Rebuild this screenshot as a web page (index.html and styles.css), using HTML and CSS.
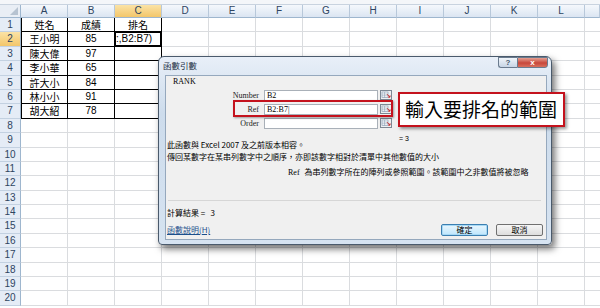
FILE: index.html
```html
<!DOCTYPE html>
<html lang="zh-Hant">
<head>
    <meta charset="UTF-8">
    <title>RANK 函數引數</title>
    <link rel="stylesheet" href="styles.css">
</head>
<body>
    <div class="topbar"></div>

    <!-- Worksheet -->
    <div class="sheet">
        <div class="corner"></div>
        <div class="col-head">A</div>
        <div class="col-head">B</div>
        <div class="col-head sel">C</div>
        <div class="col-head">D</div>
        <div class="col-head">E</div>
        <div class="col-head">F</div>
        <div class="col-head">G</div>
        <div class="col-head">H</div>
        <div class="col-head">I</div>
        <div class="col-head">J</div>
        <div class="col-head">K</div>
        <div class="col-head">L</div>
        <div class="col-head"></div>

        <div class="row-head">1</div>
        <div class="cell first">姓名</div><div class="cell">成績</div><div class="cell">排名</div><div class="rest"></div>
        <div class="row-head sel">2</div>
        <div class="cell first">王小明</div><div class="cell num">85</div><div class="cell active">:,B2:B7)</div><div class="rest"></div>
        <div class="row-head">3</div>
        <div class="cell first">陳大偉</div><div class="cell num">97</div><div class="cell"></div><div class="rest"></div>
        <div class="row-head">4</div>
        <div class="cell first">李小華</div><div class="cell num">65</div><div class="cell"></div><div class="rest"></div>
        <div class="row-head">5</div>
        <div class="cell first">許大小</div><div class="cell num">84</div><div class="cell"></div><div class="rest"></div>
        <div class="row-head">6</div>
        <div class="cell first">林小小</div><div class="cell num">91</div><div class="cell"></div><div class="rest"></div>
        <div class="row-head">7</div>
        <div class="cell first">胡大紹</div><div class="cell num">78</div><div class="cell"></div><div class="rest"></div>

        <div class="row-head">8</div><div class="rest full"></div>
        <div class="row-head">9</div><div class="rest full"></div>
        <div class="row-head">10</div><div class="rest full"></div>
        <div class="row-head">11</div><div class="rest full"></div>
        <div class="row-head">12</div><div class="rest full"></div>
        <div class="row-head">13</div><div class="rest full"></div>
        <div class="row-head">14</div><div class="rest full"></div>
        <div class="row-head">15</div><div class="rest full"></div>
        <div class="row-head">16</div><div class="rest full"></div>
        <div class="row-head">17</div><div class="rest full"></div>
        <div class="row-head">18</div><div class="rest full"></div>
        <div class="row-head">19</div><div class="rest full"></div>
        <div class="row-head">20</div><div class="rest full"></div>
    </div>

    <!-- Function Arguments dialog -->
    <div class="dialog">
        <div class="dlg-title">
            <span class="dlg-name">函數引數</span>
            <div class="dlg-ctrls">
                <span class="help">?</span>
                <span class="close">x</span>
            </div>
        </div>
        <div class="dlg-body">
            <div class="fn-name">RANK</div>

            <div class="arg">
                <span class="arg-label">Number</span>
                <span class="arg-input">B2</span>
                <span class="pick"><svg width="12" height="10" viewBox="0 0 12 10"><rect x="0.5" y="0.5" width="11" height="9" fill="#eef0f2" stroke="#7d8894"/><rect x="2" y="2" width="6" height="5.5" fill="#fff" stroke="#7890a8" stroke-width="0.6"/><path d="M2 4h6M2 5.8h6M4.6 2v5.5" stroke="#7890a8" stroke-width="0.5"/><path d="M7 4.2l2.8 2.8M8.2 7.2h1.8V5.4" stroke="#c62828" stroke-width="1" fill="none"/></svg></span>
            </div>
            <div class="arg">
                <span class="arg-label">Ref</span>
                <span class="arg-input">B2:B7|</span>
                <span class="pick"><svg width="12" height="10" viewBox="0 0 12 10"><rect x="0.5" y="0.5" width="11" height="9" fill="#eef0f2" stroke="#7d8894"/><rect x="2" y="2" width="6" height="5.5" fill="#fff" stroke="#7890a8" stroke-width="0.6"/><path d="M2 4h6M2 5.8h6M4.6 2v5.5" stroke="#7890a8" stroke-width="0.5"/><path d="M7 4.2l2.8 2.8M8.2 7.2h1.8V5.4" stroke="#c62828" stroke-width="1" fill="none"/></svg></span>
            </div>
            <div class="arg">
                <span class="arg-label">Order</span>
                <span class="arg-input"></span>
                <span class="pick"><svg width="12" height="10" viewBox="0 0 12 10"><rect x="0.5" y="0.5" width="11" height="9" fill="#eef0f2" stroke="#7d8894"/><rect x="2" y="2" width="6" height="5.5" fill="#fff" stroke="#7890a8" stroke-width="0.6"/><path d="M2 4h6M2 5.8h6M4.6 2v5.5" stroke="#7890a8" stroke-width="0.5"/><path d="M7 4.2l2.8 2.8M8.2 7.2h1.8V5.4" stroke="#c62828" stroke-width="1" fill="none"/></svg></span>
            </div>

            <div class="result">= 3</div>

            <div class="desc">此函數與 Excel 2007 及之前版本相容。</div>
            <div class="desc">傳回某數字在某串列數字中之順序，亦即該數字相對於清單中其他數值的大小</div>
            <div class="desc arg-help"><span class="arg-help-name">Ref</span>為串列數字所在的陣列或參照範圍。該範圍中之非數值將被忽略</div>

            <div class="sep"></div>

            <div class="calc">計算結果 =&nbsp;&nbsp;&nbsp;3</div>

            <div class="dlg-footer">
                <a href="#" class="help-link">函數說明(H)</a>
                <div class="buttons">
                    <span class="btn default">確定</span>
                    <span class="btn">取消</span>
                </div>
            </div>

            <!-- red highlight around the Ref row -->
            <div class="mark"></div>
        </div>
    </div>

    <!-- Callout -->
    <div class="callout">輸入要排名的範圍</div>
</body>
</html>
```

FILE: styles.css
```css
body {
    margin: 0;
    width: 600px;
    height: 308px;
    overflow: hidden;
    position: relative;
    background: #fff;
    font-family: "Noto Sans CJK TC", sans-serif;
}

.topbar {
    height: 5px;
    background: #f4f6f9;
    border-bottom: 1px solid #c9d3df;
    box-sizing: border-box;
}

/* Worksheet grid */
.sheet {
    display: grid;
    grid-template-columns: 21px repeat(12, 47px) 1fr;
    grid-template-rows: 13px repeat(20, 14.4px);
}

.sheet > div {
    box-sizing: border-box;
}

.corner {
    position: relative;
    background: #e9eef5;
    border-right: 1px solid #9eb6ce;
    border-bottom: 1px solid #9eb6ce;
}

.corner::after {
    content: "";
    position: absolute;
    right: 2px;
    bottom: 2px;
    border-left: 8px solid transparent;
    border-bottom: 8px solid #b7c3d1;
}

.col-head {
    background: linear-gradient(#f5f8fc, #dbe5f2);
    border-right: 1px solid #b8c8da;
    border-bottom: 1px solid #9eb6ce;
    font: 10px/12px "Liberation Sans", sans-serif;
    color: #2e4461;
    text-align: center;
}

.col-head.sel,
.row-head.sel {
    background: linear-gradient(#fbe3a6, #f3c66a);
}

.row-head {
    background: #e5ecf6;
    border-right: 1px solid #9eb6ce;
    border-bottom: 1px solid #c3d1e1;
    font: 10px/14px "Liberation Sans", sans-serif;
    color: #2e4461;
    text-align: center;
}

.cell {
    border-right: 1px solid #000;
    border-bottom: 1px solid #000;
    font-size: 10px;
    line-height: 13px;
    text-align: center;
    color: #000;
    white-space: nowrap;
    overflow: visible;
}

.cell.first {
    border-left: 1px solid #000;
}

.cell.num {
    font-family: "Liberation Sans", sans-serif;
}

/* active cell C2 */
.cell.active {
    position: relative;
    z-index: 1;
    text-align: left;
    padding-left: 1px;
    font-family: "Liberation Sans", sans-serif;
    overflow: hidden;
}

.cell.active::before {
    content: "";
    position: absolute;
    left: -1px;
    top: -1px;
    right: -1px;
    bottom: -1px;
    border: 2px solid #000;
}

.rest {
    grid-column: 5 / -1;
    border-bottom: 1px solid #dadcdf;
    background: repeating-linear-gradient(to right, transparent 0 46px, #dadcdf 46px 47px);
}

.rest.full {
    grid-column: 2 / -1;
}

/* Dialog */
.dialog {
    position: absolute;
    left: 158px;
    top: 56px;
    width: 394px;
    height: 189px;
    box-sizing: border-box;
    border: 1px solid #4a5a6c;
    border-radius: 6px 6px 4px 4px;
    background: linear-gradient(#e8eff8, #cddcec 30%, #d6e3f1);
    box-shadow: 3px 4px 7px rgba(0, 0, 0, 0.55);
}

.dlg-title {
    height: 18px;
    display: flex;
    justify-content: space-between;
    padding: 0 3px 0 4px;
}

.dlg-name {
    font-size: 8.5px;
    line-height: 17px;
    color: #1d2f45;
}

.dlg-ctrls {
    display: flex;
    height: 11px;
}

.help,
.close {
    height: 11px;
    box-sizing: border-box;
    border: 1px solid #6a7b8e;
    font: bold 8px/9px "Liberation Sans", sans-serif;
    text-align: center;
}

.help {
    width: 19px;
    border-radius: 0 0 0 3px;
    border-right: none;
    background: linear-gradient(#f1f5fa, #c7d5e5);
    color: #44576d;
}

.close {
    width: 31px;
    border-radius: 0 0 3px 0;
    background: linear-gradient(#e5a092, #c8473a 55%, #d8705e);
    color: #fff;
}

.dlg-body {
    position: relative;
    margin: 0 4px 0 6px;
    height: 165px;
    box-sizing: border-box;
    border: 1px solid #95a8bd;
    background: #f0f0f0;
    padding: 0 3px 0 1px;
    font-size: 8px;
    color: #000;
}

.fn-name {
    font: 8px/12px "Liberation Serif", serif;
    margin-left: 6px;
}

.arg {
    display: flex;
    align-items: center;
    height: 14px;
}

.arg-label {
    width: 92px;
    text-align: right;
    font: 8px "Liberation Serif", serif;
    color: #222;
}

.arg-input {
    margin-left: 5px;
    width: 114px;
    height: 11px;
    box-sizing: border-box;
    background: #fff;
    border: 1px solid #a9b0b8;
    font: 8px/9px "Liberation Serif", serif;
    padding-left: 2px;
}

.pick {
    margin-left: 2px;
    display: flex;
}

.result {
    margin-top: 5px;
    height: 8px;
    line-height: 8px;
    padding-left: 232px;
    font-family: "Liberation Sans", sans-serif;
    font-size: 7px;
}

.desc {
    line-height: 12px;
    white-space: nowrap;
}

.desc:first-of-type {
    margin-top: -4px;
}

.result + .desc {
    margin-top: -4px;
}

.arg-help {
    margin-top: 3px;
    padding-left: 121px;
}

.arg-help-name {
    font-family: "Liberation Serif", serif;
    margin-right: 5px;
}

.sep {
    margin: 21px 2px 0 1px;
    border-top: 1px solid #d6d6d6;
}

.calc {
    margin-top: 6px;
    line-height: 12px;
}

.dlg-footer {
    margin-top: 4px;
    height: 14px;
    display: flex;
    justify-content: space-between;
}

.help-link {
    color: #1c4f8c;
    text-decoration: underline;
    line-height: 14px;
}

.buttons {
    display: flex;
    gap: 8px;
    margin-top: 1px;
}

.btn {
    width: 47px;
    height: 12px;
    box-sizing: border-box;
    border: 1px solid #707070;
    border-radius: 2px;
    background: linear-gradient(#f6f6f6, #dddddd);
    text-align: center;
    line-height: 10px;
}

.btn.default {
    border-color: #3c7fb1;
    background: linear-gradient(#eaf6fd, #bee6fd);
    box-shadow: inset 0 0 0 1px #a7d9f5;
}

.mark {
    position: absolute;
    left: 67px;
    top: 24px;
    width: 160px;
    height: 17px;
    box-sizing: border-box;
    border: 2px solid #c4121d;
    box-shadow: 1px 1px 2px rgba(0, 0, 0, 0.35);
}

/* Callout */
.callout {
    position: absolute;
    left: 398px;
    top: 92px;
    width: 167px;
    height: 35px;
    box-sizing: border-box;
    border: 2px solid #c4121d;
    background: #fff;
    box-shadow: 2px 2px 3px rgba(0, 0, 0, 0.4);
    padding-left: 5px;
    font-size: 19px;
    line-height: 30px;
    color: #000;
    white-space: nowrap;
}
```
